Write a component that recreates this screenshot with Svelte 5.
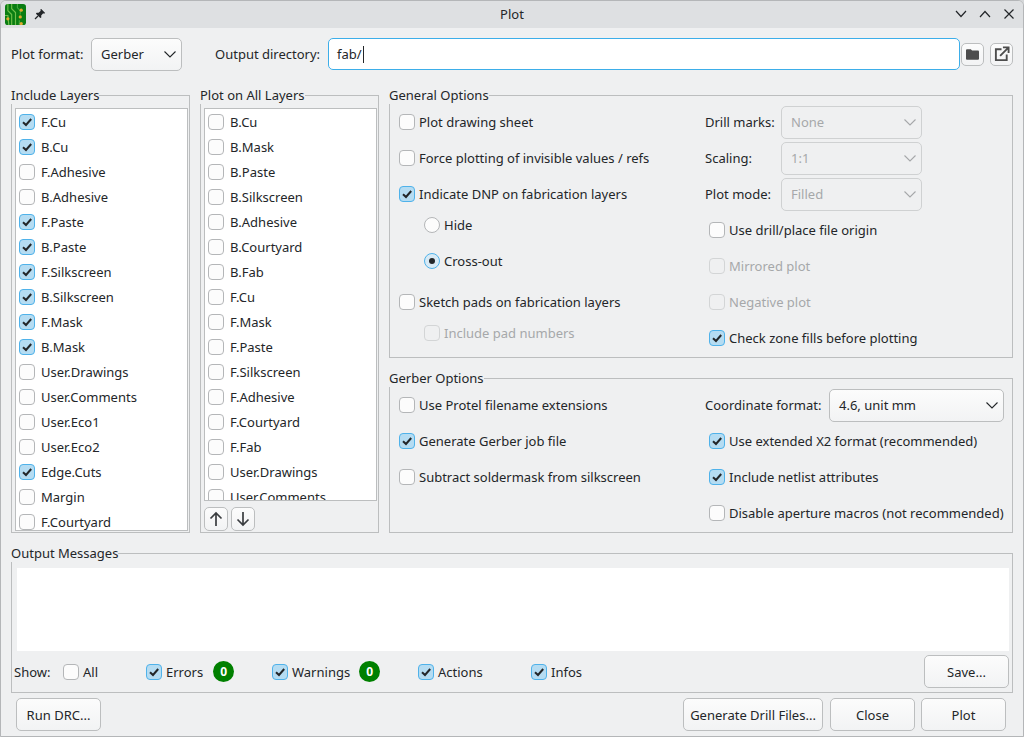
<script lang="ts">
	const includeLayers = [
		['F.Cu', true], ['B.Cu', true], ['F.Adhesive', false], ['B.Adhesive', false],
		['F.Paste', true], ['B.Paste', true], ['F.Silkscreen', true], ['B.Silkscreen', true],
		['F.Mask', true], ['B.Mask', true], ['User.Drawings', false], ['User.Comments', false],
		['User.Eco1', false], ['User.Eco2', false], ['Edge.Cuts', true], ['Margin', false],
		['F.Courtyard', false]
	] as [string, boolean][];

	const allLayers = [
		'B.Cu', 'B.Mask', 'B.Paste', 'B.Silkscreen', 'B.Adhesive', 'B.Courtyard', 'B.Fab', 'F.Cu',
		'F.Mask', 'F.Paste', 'F.Silkscreen', 'F.Adhesive', 'F.Courtyard', 'F.Fab', 'User.Drawings',
		'User.Comments'
	];
</script>

{#snippet check(label: string, checked = false, disabled = false)}
	<label class="check" class:disabled>
		<span class="box" class:checked>
			{#if checked}
				<svg width="14" height="14" viewBox="0 0 14 14"><path d="M3 7.2 6 10 11.2 4" fill="none" stroke="#232629" stroke-width="2" /></svg>
			{/if}
		</span>
		<span>{label}</span>
	</label>
{/snippet}

{#snippet radio(label: string, checked = false)}
	<label class="check">
		<span class="box round" class:checked>
			{#if checked}<span class="dot"></span>{/if}
		</span>
		<span>{label}</span>
	</label>
{/snippet}

{#snippet combo(value: string, cls = '')}
	<div class="combo {cls}">
		<span>{value}</span>
		<svg width="12" height="7" viewBox="0 0 12 7"><path d="M.5 .5 6 6 11.500 .5" fill="none" stroke="currentColor" stroke-width="1.100" /></svg>
	</div>
{/snippet}

<div class="window">
	<header class="titlebar">
		<div class="title-left">
			<svg class="logo" width="21" height="21" viewBox="0 0 22 22">
				<rect width="22" height="22" rx="3" fill="#0a7d12" />
				<path d="M7 0V5L11 9V22M3 0V7L7 11V22M0 12H3L4 22" fill="none" stroke="#6fc04a" stroke-width="1.2" />
				<path d="M13 0V4L16 7V11M15 22V17" fill="none" stroke="#3da83a" stroke-width="1.2" />
				<circle cx="3" cy="15.500" r="1.700" fill="#e0a92e" />
				<circle cx="17" cy="6.500" r="1.700" fill="#e0a92e" />
				<circle cx="16" cy="13.500" r="1.700" fill="#e0a92e" />
				<circle cx="17" cy="20.500" r="1.700" fill="#e0a92e" />
			</svg>
			<svg width="12" height="12" viewBox="0 0 12 12">
				<path d="M7 .8 11.200 5 10 5.700 9.200 5.200 7.200 7.400 7.300 9.400 6.300 10.100 1.900 5.700 2.600 4.700 4.600 4.800 6.800 2.800 6.300 2Z" fill="#232629" />
				<path d="M4 8 1 11" stroke="#232629" stroke-width="1.300" />
			</svg>
		</div>
		<div class="title">Plot</div>
		<div class="win-buttons">
			<svg width="12" height="8" viewBox="0 0 12 8"><path d="M1 1 6 6.500 11 1" fill="none" stroke="#232629" stroke-width="1.200" /></svg>
			<svg width="12" height="8" viewBox="0 0 12 8"><path d="M1 7 6 1.500 11 7" fill="none" stroke="#232629" stroke-width="1.200" /></svg>
			<svg width="12" height="12" viewBox="0 0 12 12"><path d="M1.500 1.500 10.500 10.500M10.500 1.500 1.500 10.500" fill="none" stroke="#232629" stroke-width="1.200" /></svg>
		</div>
	</header>

	<main class="content">
		<div class="top-row">
			<span class="top-label">Plot format:</span>
			{@render combo('Gerber', 'format-combo')}
			<span class="top-label dir-label">Output directory:</span>
			<div class="dir-input">fab/<span class="cursor"></span></div>
			<button class="icon-btn" aria-label="Browse">
				<svg width="15" height="13" viewBox="0 0 17 15"><path d="M1 3C1 2 1.600 1.500 2.500 1.500H6.500L8 3H14.500C15.500 3 16 3.600 16 4.500V12C16 13 15.400 13.500 14.500 13.500H2.500C1.500 13.500 1 13 1 12Z" fill="#4d4d4d" /></svg>
			</button>
			<button class="icon-btn" aria-label="Open">
				<svg width="16" height="16" viewBox="0 0 17 17"><path d="M8 3.500H2V15H13.500V9" fill="none" stroke="#4d4d4d" stroke-width="2" /><path d="M6.500 10.500 15 2M9.500 1.500H15.500V7.500" fill="none" stroke="#4d4d4d" stroke-width="2" /></svg>
			</button>
		</div>

		<div class="main-grid">
			<fieldset class="layers">
				<legend>Include Layers</legend>
				<div class="list tall">
					{#each includeLayers as [name, on]}
						<div class="list-row">{@render check(name, on)}</div>
					{/each}
				</div>
			</fieldset>

			<fieldset class="layers">
				<legend>Plot on All Layers</legend>
				<div class="list short">
					{#each allLayers as name}
						<div class="list-row">{@render check(name)}</div>
					{/each}
				</div>
				<div class="arrows">
					<button class="icon-btn" aria-label="Up">
						<svg width="14" height="16" viewBox="0 0 14 16"><path d="M7 15V2M1.500 7.500 7 2 12.500 7.500" fill="none" stroke="#3a3d40" stroke-width="1.700" /></svg>
					</button>
					<button class="icon-btn" aria-label="Down">
						<svg width="14" height="16" viewBox="0 0 14 16"><path d="M7 1V14M1.500 8.500 7 14 12.500 8.500" fill="none" stroke="#3a3d40" stroke-width="1.700" /></svg>
					</button>
				</div>
			</fieldset>

			<div class="options">
				<fieldset class="opt-group">
					<legend>General Options</legend>
					<div class="opt-grid">
						<div class="opt-col">
							<div class="row">{@render check('Plot drawing sheet')}</div>
							<div class="row">{@render check('Force plotting of invisible values / refs')}</div>
							<div class="row">{@render check('Indicate DNP on fabrication layers', true)}</div>
							<div class="row sub tight">{@render radio('Hide')}</div>
							<div class="row sub">{@render radio('Cross-out', true)}</div>
							<div class="row loose">{@render check('Sketch pads on fabrication layers')}</div>
							<div class="row sub tight">{@render check('Include pad numbers', false, true)}</div>
						</div>
						<div class="opt-col">
							<div class="row"><span class="field-label">Drill marks:</span>{@render combo('None', 'off-combo')}</div>
							<div class="row"><span class="field-label">Scaling:</span>{@render combo('1:1', 'off-combo')}</div>
							<div class="row"><span class="field-label">Plot mode:</span>{@render combo('Filled', 'off-combo')}</div>
							<div class="row indent">{@render check('Use drill/place file origin')}</div>
							<div class="row indent">{@render check('Mirrored plot', false, true)}</div>
							<div class="row indent">{@render check('Negative plot', false, true)}</div>
							<div class="row indent">{@render check('Check zone fills before plotting', true)}</div>
						</div>
					</div>
				</fieldset>

				<fieldset class="opt-group">
					<legend>Gerber Options</legend>
					<div class="opt-grid">
						<div class="opt-col">
							<div class="row">{@render check('Use Protel filename extensions')}</div>
							<div class="row">{@render check('Generate Gerber job file', true)}</div>
							<div class="row">{@render check('Subtract soldermask from silkscreen')}</div>
						</div>
						<div class="opt-col">
							<div class="row"><span class="field-label wide">Coordinate format:</span>{@render combo('4.6, unit mm', 'coord-combo')}</div>
							<div class="row indent">{@render check('Use extended X2 format (recommended)', true)}</div>
							<div class="row indent">{@render check('Include netlist attributes', true)}</div>
							<div class="row indent">{@render check('Disable aperture macros (not recommended)')}</div>
						</div>
					</div>
				</fieldset>
			</div>
		</div>

		<fieldset class="messages">
			<legend>Output Messages</legend>
			<div class="log"></div>
			<div class="show-row">
				<span class="show-label">Show:</span>
				<div class="filter all">{@render check('All')}</div>
				<div class="filter errors">{@render check('Errors', true)}<span class="badge">0</span></div>
				<div class="filter warnings">{@render check('Warnings', true)}<span class="badge">0</span></div>
				<div class="filter actions">{@render check('Actions', true)}</div>
				<div class="filter">{@render check('Infos', true)}</div>
				<button class="btn save">Save...</button>
			</div>
		</fieldset>

		<footer class="footer">
			<button class="btn">Run DRC...</button>
			<div class="spacer"></div>
			<button class="btn drill">Generate Drill Files...</button>
			<button class="btn">Close</button>
			<button class="btn">Plot</button>
		</footer>
	</main>
</div>

<style>
	:global(body) {
		background: #d5d7d9;
	}

	.window {
		box-sizing: border-box;
		width: 1024px;
		height: 737px;
		display: flex;
		flex-direction: column;
		background: #eff0f1;
		border: 1px solid #b4b6b8;
		border-radius: 6px 6px 0 0;
		overflow: hidden;
		font-family: 'Noto Sans', sans-serif;
		font-size: 13px;
		color: #232629;
	}

	.titlebar {
		height: 26px;
		padding-bottom: 1px;
		flex: none;
		display: flex;
		align-items: center;
		background: #dee0e2;
		position: relative;
	}

	.title-left {
		display: flex;
		align-items: center;
		gap: 8px;
		padding-left: 4px;
	}

	.logo {
		margin-top: 1px;
	}

	.title {
		position: absolute;
		left: 0;
		right: 0;
		text-align: center;
		pointer-events: none;
	}

	.win-buttons {
		margin-left: auto;
		display: flex;
		align-items: center;
		gap: 12px;
		padding-right: 8px;
	}

	.content {
		flex: 1;
		display: flex;
		flex-direction: column;
		padding: 10px 10px 0;
		min-height: 0;
	}

	.top-row {
		display: flex;
		align-items: center;
		height: 32px;
	}

	.top-label {
		width: 80px;
		flex: none;
		white-space: nowrap;
	}

	.dir-label {
		width: 113px;
		margin-left: 33px;
	}

	.combo {
		box-sizing: border-box;
		height: 33px;
		display: flex;
		align-items: center;
		justify-content: space-between;
		padding: 0 5px 0 9px;
		border: 1px solid #bcbebf;
		border-radius: 5px;
		background: linear-gradient(#fcfcfc, #f2f3f4);
	}

	.format-combo {
		width: 91px;
	}

	.off-combo {
		width: 141px;
		color: #a6a8aa;
		background: #eff0f1;
		border-color: #cfd1d2;
	}

	.coord-combo {
		width: 175px;
	}

	.dir-input {
		box-sizing: border-box;
		flex: none;
		width: 632px;
		height: 32px;
		margin-right: 1px;
		padding-left: 8px;
		display: flex;
		align-items: center;
		background: #fff;
		border: 1px solid #3daee9;
		border-radius: 5px;
	}

	.cursor {
		width: 1px;
		height: 17px;
		margin-left: 1px;
		background: #232629;
	}

	.icon-btn {
		box-sizing: border-box;
		width: 24px;
		height: 24px;
		padding: 0;
		display: flex;
		align-items: center;
		justify-content: center;
		background: linear-gradient(#fcfcfc, #f2f3f4);
		border: 1px solid #bcbebf;
		border-radius: 5px;
	}

	.top-row .icon-btn {
		width: 23px;
		height: 23px;
	}

	.top-row .icon-btn + .icon-btn {
		margin-left: 6px;
	}

	.main-grid {
		display: grid;
		grid-template-columns: 179px 179px 624px;
		gap: 10px;
		margin-top: 16px;
	}

	fieldset {
		box-sizing: border-box;
		min-width: 0;
		margin: 0;
		padding: 0;
		border: 1px solid #bcbebf;
	}

	legend {
		padding: 0;
		height: 18px;
		line-height: 18px;
		margin-left: -1px;
	}

	.layers {
		padding: 4px 1px 1px 3px;
	}

	.layers legend {
		margin-left: -4px;
	}

	.list {
		box-sizing: border-box;
		width: 173px;
		background: #fff;
		border: 1px solid #bcbebf;
		overflow: hidden;
	}

	.tall {
		height: 423px;
	}

	.short {
		height: 393px;
	}

	.list-row {
		height: 25px;
		display: flex;
		align-items: center;
		padding-left: 3px;
	}

	.arrows {
		display: flex;
		gap: 3px;
		margin-top: 6px;
	}

	.check {
		display: inline-flex;
		align-items: center;
		gap: 4px;
		white-space: nowrap;
	}

	.list-row .check {
		gap: 6px;
	}

	.check.disabled {
		color: #a6a8aa;
	}

	.box {
		box-sizing: border-box;
		flex: none;
		width: 16px;
		height: 16px;
		display: flex;
		align-items: center;
		justify-content: center;
		background: #fcfcfc;
		border: 1px solid #b4b6b8;
		border-radius: 4px;
	}

	.box.checked {
		background: #b5dcf2;
		border-color: #4fb2ea;
	}

	.box.round {
		border-radius: 50%;
	}

	.box.round.checked {
		background: #d8eaf5;
	}

	.dot {
		width: 6px;
		height: 6px;
		border-radius: 50%;
		background: #232629;
	}

	.disabled .box {
		background: #eff0f1;
		border-color: #d3d5d6;
	}

	.options {
		display: flex;
		flex-direction: column;
		gap: 11px;
	}

	.opt-group {
		padding: 0 0 1px 9px;
	}

	.opt-group legend {
		margin-left: -10px;
	}

	.opt-grid {
		display: grid;
		grid-template-columns: 306px 1fr;
	}

	.opt-col {
		display: flex;
		flex-direction: column;
	}

	.row {
		height: 36px;
		flex: none;
		display: flex;
		align-items: center;
	}

	.sub {
		padding-left: 25px;
	}

	.tight {
		margin-top: -5px;
	}

	.loose {
		margin-top: 5px;
	}

	.indent {
		padding-left: 4px;
	}

	.field-label {
		width: 76px;
		flex: none;
	}

	.field-label.wide {
		width: 124px;
	}

	.messages {
		height: 149px;
		margin-top: 11px;
		padding: 6px 3px 0 0;
		width: 1002px;
	}

	.log {
		height: 83px;
		margin-left: 5px;
		background: #fff;
	}

	.show-row {
		display: flex;
		align-items: center;
		height: 33px;
		margin-top: 4px;
		padding-left: 2px;
	}

	.show-label {
		width: 49px;
	}

	.filter {
		display: flex;
		align-items: center;
	}

	.all {
		width: 83px;
	}

	.errors {
		width: 126px;
	}

	.warnings {
		width: 146px;
	}

	.actions {
		width: 113px;
	}

	.badge {
		width: 21px;
		height: 21px;
		margin-left: 9px;
		display: flex;
		align-items: center;
		justify-content: center;
		border-radius: 50%;
		background: #008000;
		color: #fff;
		font-size: 12px;
		font-weight: 700;
	}

	.errors .badge {
		margin-left: 10px;
	}

	.btn {
		box-sizing: border-box;
		width: 85px;
		height: 33px;
		padding: 0;
		font: inherit;
		color: inherit;
		background: linear-gradient(#fcfcfc, #f2f3f4);
		border: 1px solid #bcbebf;
		border-radius: 5px;
	}

	.save {
		margin-left: auto;
	}

	.footer {
		display: flex;
		gap: 6px;
		margin-top: 5px;
		padding: 0 7px 0 5px;
		width: 1002px;
		box-sizing: border-box;
	}

	.spacer {
		flex: 1;
	}

	.drill {
		width: 140px;
		margin-right: 1px;
	}
</style>
